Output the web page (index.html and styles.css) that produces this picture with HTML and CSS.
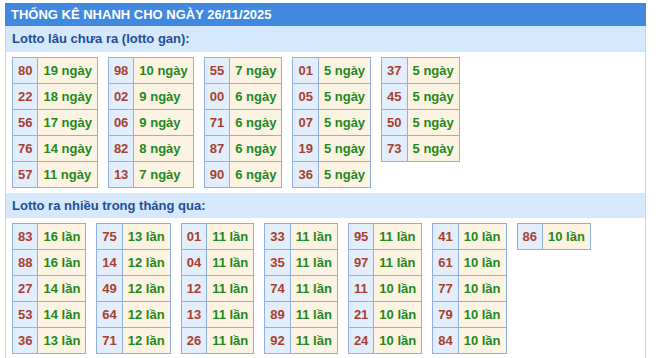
FILE: index.html
```html
<!DOCTYPE html>
<html lang="vi">
<head>
<meta charset="utf-8">
<link rel="stylesheet" href="styles.css">
</head>
<body>
<div class="box">
  <div class="title">THỐNG KÊ NHANH CHO NGÀY 26/11/2025</div>
  <div class="body">
    <div class="sub">Lotto lâu chưa ra (lotto gan):</div>
    <div class="groups">
      <table><tr><td class="n">80</td><td class="v">19 ngày</td></tr><tr><td class="n">22</td><td class="v">18 ngày</td></tr><tr><td class="n">56</td><td class="v">17 ngày</td></tr><tr><td class="n">76</td><td class="v">14 ngày</td></tr><tr><td class="n">57</td><td class="v">11 ngày</td></tr></table>
      <table><tr><td class="n">98</td><td class="v">10 ngày</td></tr><tr><td class="n">02</td><td class="v">9 ngày</td></tr><tr><td class="n">06</td><td class="v">9 ngày</td></tr><tr><td class="n">82</td><td class="v">8 ngày</td></tr><tr><td class="n">13</td><td class="v">7 ngày</td></tr></table>
      <table><tr><td class="n">55</td><td class="v">7 ngày</td></tr><tr><td class="n">00</td><td class="v">6 ngày</td></tr><tr><td class="n">71</td><td class="v">6 ngày</td></tr><tr><td class="n">87</td><td class="v">6 ngày</td></tr><tr><td class="n">90</td><td class="v">6 ngày</td></tr></table>
      <table><tr><td class="n">01</td><td class="v">5 ngày</td></tr><tr><td class="n">05</td><td class="v">5 ngày</td></tr><tr><td class="n">07</td><td class="v">5 ngày</td></tr><tr><td class="n">19</td><td class="v">5 ngày</td></tr><tr><td class="n">36</td><td class="v">5 ngày</td></tr></table>
      <table><tr><td class="n">37</td><td class="v">5 ngày</td></tr><tr><td class="n">45</td><td class="v">5 ngày</td></tr><tr><td class="n">50</td><td class="v">5 ngày</td></tr><tr><td class="n">73</td><td class="v">5 ngày</td></tr></table>
    </div>
    <div class="sub second">Lotto ra nhiều trong tháng qua:</div>
    <div class="groups">
      <table><tr><td class="n">83</td><td class="v">16 lần</td></tr><tr><td class="n">88</td><td class="v">16 lần</td></tr><tr><td class="n">27</td><td class="v">14 lần</td></tr><tr><td class="n">53</td><td class="v">14 lần</td></tr><tr><td class="n">36</td><td class="v">13 lần</td></tr></table>
      <table><tr><td class="n">75</td><td class="v">13 lần</td></tr><tr><td class="n">14</td><td class="v">12 lần</td></tr><tr><td class="n">49</td><td class="v">12 lần</td></tr><tr><td class="n">64</td><td class="v">12 lần</td></tr><tr><td class="n">71</td><td class="v">12 lần</td></tr></table>
      <table><tr><td class="n">01</td><td class="v">11 lần</td></tr><tr><td class="n">04</td><td class="v">11 lần</td></tr><tr><td class="n">12</td><td class="v">11 lần</td></tr><tr><td class="n">13</td><td class="v">11 lần</td></tr><tr><td class="n">26</td><td class="v">11 lần</td></tr></table>
      <table><tr><td class="n">33</td><td class="v">11 lần</td></tr><tr><td class="n">35</td><td class="v">11 lần</td></tr><tr><td class="n">74</td><td class="v">11 lần</td></tr><tr><td class="n">89</td><td class="v">11 lần</td></tr><tr><td class="n">92</td><td class="v">11 lần</td></tr></table>
      <table><tr><td class="n">95</td><td class="v">11 lần</td></tr><tr><td class="n">97</td><td class="v">11 lần</td></tr><tr><td class="n">11</td><td class="v">10 lần</td></tr><tr><td class="n">21</td><td class="v">10 lần</td></tr><tr><td class="n">24</td><td class="v">10 lần</td></tr></table>
      <table><tr><td class="n">41</td><td class="v">10 lần</td></tr><tr><td class="n">61</td><td class="v">10 lần</td></tr><tr><td class="n">77</td><td class="v">10 lần</td></tr><tr><td class="n">79</td><td class="v">10 lần</td></tr><tr><td class="n">84</td><td class="v">10 lần</td></tr></table>
      <table><tr><td class="n">86</td><td class="v">10 lần</td></tr></table>
    </div>
  </div>
</div>
</body>
</html>
```
FILE: styles.css
```css
html, body {
  margin: 0;
  padding: 0;
  background: #ffffff;
}
body {
  padding: 3px 0 0 5px;
  font-family: "Liberation Sans", Arial, sans-serif;
  font-size: 13px;
  font-weight: bold;
}
.box {
  width: 641px;
}
.title {
  height: 23px;
  line-height: 23px;
  background: #4189e0;
  color: #ffffff;
  padding-left: 6px;
}
.body {
  border-left: 1px solid #c8d4e2;
  border-right: 1px solid #c8d4e2;
  height: 335px;
}
.sub {
  height: 26px;
  line-height: 25px;
  background: #d6e8fb;
  color: #1d4f98;
  padding-left: 6px;
}
.sub.second {
  height: 25px;
  line-height: 25px;
}
.groups {
  display: flex;
  align-items: flex-start;
  gap: 10px;
  padding: 5px 6px;
}
table {
  border-collapse: collapse;
}
td {
  border: 1px solid #8fb0e1;
  height: 25px;
  padding: 0 5px;
  line-height: 25px;
  white-space: nowrap;
}
td.n {
  background: #e3eefc;
  color: #a8402c;
}
td.v {
  background: #fdf3e2;
  color: #1d8a1d;
}
```
